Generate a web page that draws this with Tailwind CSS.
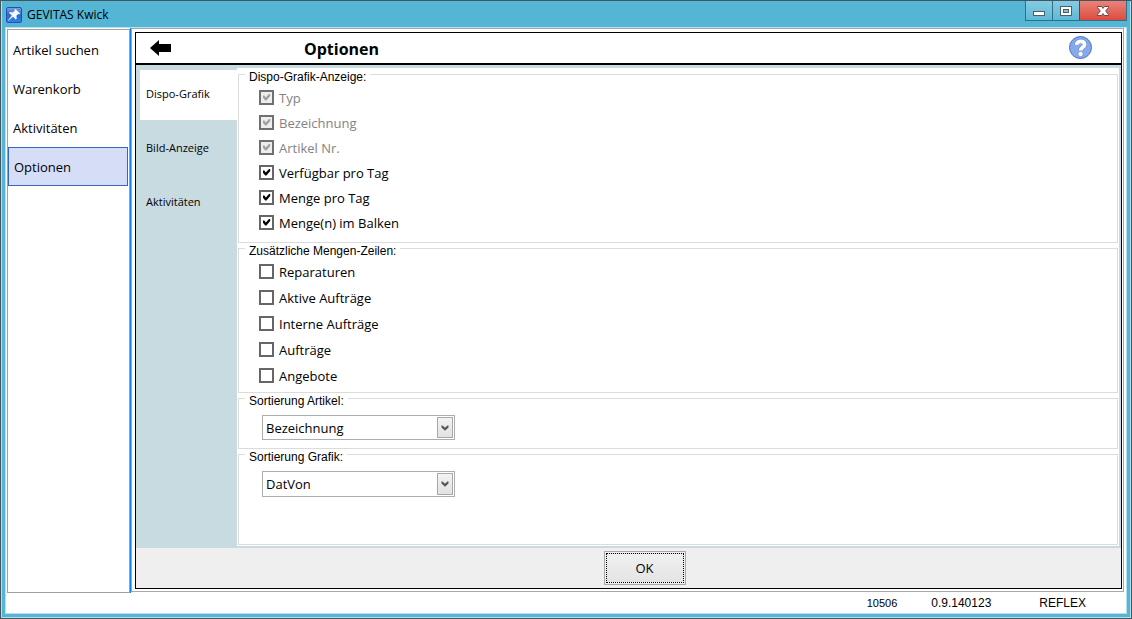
<!DOCTYPE html>
<html lang="de">

<head>
  <meta charset="UTF-8" />
  <meta name="viewport" content="width=device-width, initial-scale=1.0" />
  <title>GEVITAS Kwick</title>
  <script src="https://cdn.jsdelivr.net/npm/@tailwindcss/browser@4"></script>
</head>

<body class="h-screen bg-[#44565d] p-px font-['Open_Sans',sans-serif] text-[13px] text-black">
  <!-- Shared glyphs -->
  <svg class="hidden">
    <symbol id="check" viewBox="0 0 9 9">
      <path d="M1 2.6H2.4L3.8 4.4 7 1H8.2V3L4.4 7.6H3.2L1 4.8Z" fill="currentColor" />
    </symbol>
    <symbol id="chevron" viewBox="0 0 8 6">
      <path d="M0.5 0.5H1.6L4 2.8 6.4 0.5H7.5V2.4L4 5.8 0.5 2.4Z" fill="currentColor" />
    </symbol>
  </svg>

  <div class="flex h-full flex-col border-x border-b border-[#b5dfec] bg-[#54b5d5]">

    <!-- Title bar -->
    <header class="flex h-[26px] items-start justify-between pl-1 pr-[3px]">
      <div class="flex h-full items-center gap-[5px] pt-px text-[12px]">
        <svg class="size-4" viewBox="0 0 16 16" aria-hidden="true">
          <defs>
            <linearGradient id="pin-bg" x1="0" y1="0" x2="0" y2="1">
              <stop offset="0" stop-color="#7f9fe0" />
              <stop offset="0.5" stop-color="#2f66cc" />
              <stop offset="1" stop-color="#2a86ee" />
            </linearGradient>
          </defs>
          <rect x="0.5" y="0.5" width="15" height="15" rx="1.5" fill="url(#pin-bg)" stroke="#2450ae" />
          <path d="M9.4 2 14.2 6.4 13.4 7.2 12.2 7 10.4 8.8 10.8 11.4 9.8 12.4 7 9.8 2.4 13.8 2 13.4 5.8 8.6 3 5.8 4 5 6.8 5.4 8.8 3.8 8.6 2.6Z" fill="#f4f8ff" />
        </svg>
        <span>GEVITAS Kwick</span>
      </div>
      <div class="flex h-5 border-x border-b border-[#2f6f88]">
        <button type="button" aria-label="Minimieren" class="flex w-[26px] items-center justify-center bg-linear-to-b from-[#86cbe2] to-[#5fb8d6]">
          <svg class="h-5 w-3" viewBox="0 0 12 20">
            <rect x="0.5" y="10.5" width="11" height="4" fill="#fff" stroke="#4b5f68" />
          </svg>
        </button>
        <button type="button" aria-label="Maximieren" class="flex w-[27px] items-center justify-center border-l border-[#2f6f88] bg-linear-to-b from-[#86cbe2] to-[#5fb8d6]">
          <svg class="h-5 w-3" viewBox="0 0 12 20">
            <rect x="0.5" y="5.5" width="11" height="9" fill="#fff" stroke="#4b5f68" />
            <rect x="3.5" y="8.5" width="5" height="3" fill="#7cc3dc" stroke="#4b5f68" />
          </svg>
        </button>
        <button type="button" aria-label="Schließen" class="flex w-[47px] items-center justify-center border-l border-[#7a3a3a] bg-linear-to-b from-[#ea8279] to-[#dc4a3d]">
          <svg class="h-5 w-3" viewBox="0 0 12 20">
            <path d="M0.5 5.5H4.5L6 7.4 7.5 5.5H11.5V6.5L8.7 10 11.5 13.5V14.5H7.5L6 12.6 4.5 14.5H0.5V13.5L3.3 10 0.5 6.5Z" fill="#fff" stroke="#6b4545" />
          </svg>
        </button>
      </div>
    </header>

    <div class="mx-[3px] mb-[3px] flex flex-1 flex-col border border-[#b5dfec] bg-white">
      <div class="flex flex-1">

        <!-- Main navigation -->
        <nav class="ml-px mt-px w-[123px] border border-[#a0a0a0]">
          <a href="#" class="flex h-[39px] items-center px-[5px] pt-[2px]">Artikel suchen</a>
          <a href="#" class="flex h-[39px] items-center px-[5px] pt-[2px]">Warenkorb</a>
          <a href="#" class="flex h-[39px] items-center px-[5px] pt-[2px]">Aktivitäten</a>
          <a href="#" aria-current="page" class="mr-px flex h-[39px] items-center border border-[#3068bd] bg-[#d5ddf7] px-[5px] pt-[3px]">Optionen</a>
        </nav>
        <div class="w-px bg-[#0a82ff]"></div>

        <main class="mb-px mr-[2px] flex flex-1 border border-[#a8a8a8] pb-[2px] pl-[3px] pr-px pt-[3px]">
          <form class="flex flex-1 flex-col border border-black">

            <!-- Page header -->
            <div class="flex h-8 items-center border-b-2 border-black pl-[14px] pr-7">
              <button type="button" aria-label="Zurück">
                <svg class="h-4 w-[21px]" viewBox="0 0 21 16">
                  <path d="M0 8 9 0V4H21V12H9V16Z" />
                </svg>
              </button>
              <h1 class="ml-[133px] flex-1 pt-[2px] text-[16px] font-bold leading-5">Optionen</h1>
              <button type="button" aria-label="Hilfe">
                <svg class="size-6" viewBox="0 0 24 24">
                  <circle cx="11.5" cy="11.5" r="11" fill="#85aaea" stroke="#5272c0" />
                  <path d="M7.8 8.8C7.6 4.2 15.8 4.2 15.6 8.6 15.4 11.4 11.6 11.2 11.6 14.6" fill="none" stroke="#6888d4" stroke-width="5" />
                  <path d="M7.8 8.8C7.6 4.2 15.8 4.2 15.6 8.6 15.4 11.4 11.6 11.2 11.6 14.6" fill="none" stroke="#fff" stroke-width="3.8" />
                  <circle cx="11.6" cy="18" r="2.5" fill="#fff" stroke="#6888d4" stroke-width="0.6" />
                </svg>
              </button>
            </div>

            <div class="flex flex-1 bg-[#c8dbe1] pb-[2px] pr-[2px] pt-[3px]">
              <!-- Option tabs -->
              <nav class="flex w-[101px] flex-col gap-1 pl-1 pt-[2px] text-[11px]">
                <a href="#" aria-current="page" class="flex h-[50px] items-center bg-white px-[6px] pb-[2px]">Dispo-Grafik</a>
                <a href="#" class="flex h-[50px] items-center px-[6px] pb-[2px]">Bild-Anzeige</a>
                <a href="#" class="flex h-[50px] items-center px-[6px] pb-[2px]">Aktivitäten</a>
              </nav>

              <div class="flex flex-1 flex-col gap-[5px] bg-white px-px pb-px pt-[6px]">
                <fieldset class="relative flex flex-col items-start gap-[10px] border border-[#dcdcdc] pb-3 pl-5 pt-[15px]">
                  <legend class="absolute -top-[6px] left-[6px] bg-white px-1 font-['Liberation_Sans',sans-serif] text-[12px] leading-4">Dispo-Grafik-Anzeige:</legend>
                  <label class="relative flex h-[15px] items-center gap-[5px] text-[#838383]">
                    <input type="checkbox" checked disabled class="peer size-[15px] appearance-none border-2 border-[#707070] bg-[#eeeeee]" />
                    <svg class="absolute left-[3px] top-[3px] hidden size-[9px] text-[#a0a0a0] peer-checked:block"><use href="#check" /></svg>
                    <span class="pt-[2px]">Typ</span>
                  </label>
                  <label class="relative flex h-[15px] items-center gap-[5px] text-[#838383]">
                    <input type="checkbox" checked disabled class="peer size-[15px] appearance-none border-2 border-[#707070] bg-[#eeeeee]" />
                    <svg class="absolute left-[3px] top-[3px] hidden size-[9px] text-[#a0a0a0] peer-checked:block"><use href="#check" /></svg>
                    <span class="pt-[2px]">Bezeichnung</span>
                  </label>
                  <label class="relative flex h-[15px] items-center gap-[5px] text-[#838383]">
                    <input type="checkbox" checked disabled class="peer size-[15px] appearance-none border-2 border-[#707070] bg-[#eeeeee]" />
                    <svg class="absolute left-[3px] top-[3px] hidden size-[9px] text-[#a0a0a0] peer-checked:block"><use href="#check" /></svg>
                    <span class="pt-[2px]">Artikel Nr.</span>
                  </label>
                  <label class="relative flex h-[15px] items-center gap-[5px]">
                    <input type="checkbox" checked class="peer size-[15px] appearance-none border-2 border-[#666666] bg-white" />
                    <svg class="absolute left-[3px] top-[3px] hidden size-[9px] peer-checked:block"><use href="#check" /></svg>
                    <span class="pt-[2px]">Verfügbar pro Tag</span>
                  </label>
                  <label class="relative flex h-[15px] items-center gap-[5px]">
                    <input type="checkbox" checked class="peer size-[15px] appearance-none border-2 border-[#666666] bg-white" />
                    <svg class="absolute left-[3px] top-[3px] hidden size-[9px] peer-checked:block"><use href="#check" /></svg>
                    <span class="pt-[2px]">Menge pro Tag</span>
                  </label>
                  <label class="relative flex h-[15px] items-center gap-[5px]">
                    <input type="checkbox" checked class="peer size-[15px] appearance-none border-2 border-[#666666] bg-white" />
                    <svg class="absolute left-[3px] top-[3px] hidden size-[9px] peer-checked:block"><use href="#check" /></svg>
                    <span class="pt-[2px]">Menge(n) im Balken</span>
                  </label>
                </fieldset>

                <fieldset class="relative flex flex-col items-start gap-[11px] border border-[#dcdcdc] pb-[9px] pl-5 pt-[15px]">
                  <legend class="absolute -top-[6px] left-[6px] bg-white px-1 font-['Liberation_Sans',sans-serif] text-[12px] leading-4">Zusätzliche Mengen-Zeilen:</legend>
                  <label class="relative flex h-[15px] items-center gap-[5px]">
                    <input type="checkbox" class="peer size-[15px] appearance-none border-2 border-[#666666] bg-white" />
                    <svg class="absolute left-[3px] top-[3px] hidden size-[9px] peer-checked:block"><use href="#check" /></svg>
                    <span class="pt-[2px]">Reparaturen</span>
                  </label>
                  <label class="relative flex h-[15px] items-center gap-[5px]">
                    <input type="checkbox" class="peer size-[15px] appearance-none border-2 border-[#666666] bg-white" />
                    <svg class="absolute left-[3px] top-[3px] hidden size-[9px] peer-checked:block"><use href="#check" /></svg>
                    <span class="pt-[2px]">Aktive Aufträge</span>
                  </label>
                  <label class="relative flex h-[15px] items-center gap-[5px]">
                    <input type="checkbox" class="peer size-[15px] appearance-none border-2 border-[#666666] bg-white" />
                    <svg class="absolute left-[3px] top-[3px] hidden size-[9px] peer-checked:block"><use href="#check" /></svg>
                    <span class="pt-[2px]">Interne Aufträge</span>
                  </label>
                  <label class="relative flex h-[15px] items-center gap-[5px]">
                    <input type="checkbox" class="peer size-[15px] appearance-none border-2 border-[#666666] bg-white" />
                    <svg class="absolute left-[3px] top-[3px] hidden size-[9px] peer-checked:block"><use href="#check" /></svg>
                    <span class="pt-[2px]">Aufträge</span>
                  </label>
                  <label class="relative flex h-[15px] items-center gap-[5px]">
                    <input type="checkbox" class="peer size-[15px] appearance-none border-2 border-[#666666] bg-white" />
                    <svg class="absolute left-[3px] top-[3px] hidden size-[9px] peer-checked:block"><use href="#check" /></svg>
                    <span class="pt-[2px]">Angebote</span>
                  </label>
                </fieldset>

                <fieldset class="relative border border-[#dcdcdc] pb-2 pl-[23px] pt-4">
                  <legend class="absolute -top-[6px] left-[6px] bg-white px-1 font-['Liberation_Sans',sans-serif] text-[12px] leading-4"><label for="sort-article">Sortierung Artikel:</label></legend>
                  <div class="relative w-[193px]">
                    <select id="sort-article" class="block h-[25px] w-full appearance-none border border-[#abadb3] bg-white pl-[3px] pr-5 pt-[2px]">
                      <option>Bezeichnung</option>
                    </select>
                    <span class="pointer-events-none absolute inset-y-[2px] right-[2px] flex w-4 items-center justify-center border border-[#a8a8a8] bg-linear-to-b from-[#f2f2f2] to-[#e2e2e2]">
                      <svg class="h-[6px] w-2 text-[#555555]"><use href="#chevron" /></svg>
                    </span>
                  </div>
                </fieldset>

                <fieldset class="relative flex-1 border border-[#dcdcdc] pl-[23px] pt-4">
                  <legend class="absolute -top-[6px] left-[6px] bg-white px-1 font-['Liberation_Sans',sans-serif] text-[12px] leading-4"><label for="sort-chart">Sortierung Grafik:</label></legend>
                  <div class="relative w-[193px]">
                    <select id="sort-chart" class="block h-[26px] w-full appearance-none border border-[#abadb3] bg-white pl-[3px] pr-5 pt-[2px]">
                      <option>DatVon</option>
                    </select>
                    <span class="pointer-events-none absolute inset-y-[2px] right-[2px] flex w-4 items-center justify-center border border-[#a8a8a8] bg-linear-to-b from-[#f2f2f2] to-[#e2e2e2]">
                      <svg class="h-[6px] w-2 text-[#555555]"><use href="#chevron" /></svg>
                    </span>
                  </div>
                </fieldset>
              </div>
            </div>

            <!-- Dialog buttons -->
            <div class="flex h-10 items-center justify-center bg-[#efefef] pl-8">
              <button type="submit" class="h-[34px] w-[82px] border border-[#a8a8a8] bg-[#f0f0f0] p-px">
                <span class="flex h-full items-center justify-center border border-dotted border-black bg-linear-to-b from-[#f0f0f0] to-[#e4e4e4] pt-[2px]">OK</span>
              </button>
            </div>
          </form>
        </main>
      </div>

      <!-- Status bar -->
      <footer class="flex h-5 items-center justify-end pr-10 font-['Liberation_Sans',sans-serif] text-[12px]">
        <span class="mr-[34px] text-[11px]">10506</span>
        <span class="mr-12">0.9.140123</span>
        <span>REFLEX</span>
      </footer>
    </div>
  </div>
</body>

</html>
